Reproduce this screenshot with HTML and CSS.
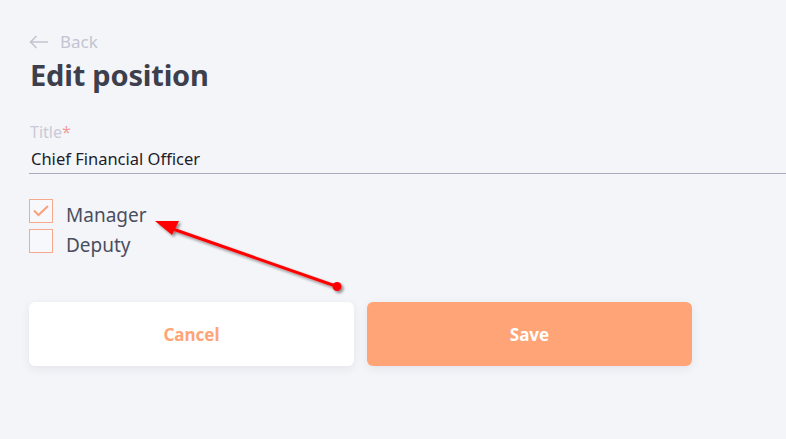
FILE: index.html
```html
<!DOCTYPE html>
<html>
<head>
<meta charset="utf-8">
<link rel="stylesheet" href="styles.css">
</head>
<body>
<div class="page">
  <a class="back">
    <svg class="back-icon" width="20" height="14" viewBox="0 0 20 14"><path d="M19 7H1.5M7.5 1L1.5 7l6 6" fill="none" stroke="#c3c4d1" stroke-width="1.6"/></svg>
    <span>Back</span>
  </a>
  <h1 class="heading">Edit position</h1>

  <div class="field">
    <label class="label">Title<span class="req">*</span></label>
    <div class="input">Chief Financial Officer</div>
  </div>

  <div class="checks">
    <label class="check">
      <span class="box"><svg width="16" height="12" viewBox="0 0 16 12"><path d="M1 5.5l4.5 4.5L15 1" fill="none" stroke="#f9a07c" stroke-width="2"/></svg></span>
      <span class="check-text">Manager</span>
    </label>
    <label class="check">
      <span class="box"></span>
      <span class="check-text">Deputy</span>
    </label>
  </div>

  <div class="actions">
    <button class="btn btn-cancel">Cancel</button>
    <button class="btn btn-save">Save</button>
  </div>

  <svg class="annot" width="786" height="439" viewBox="0 0 786 439">
    <defs>
      <filter id="sh" x="-20%" y="-50%" width="140%" height="200%">
        <feGaussianBlur in="SourceAlpha" stdDeviation="1.5"/>
        <feOffset dx="2" dy="2" result="b"/>
        <feComponentTransfer><feFuncA type="linear" slope="0.45"/></feComponentTransfer>
        <feMerge><feMergeNode/><feMergeNode in="SourceGraphic"/></feMerge>
      </filter>
    </defs>
    <g filter="url(#sh)">
      <line x1="337" y1="286.5" x2="170" y2="228" stroke="#ff0000" stroke-width="3"/>
      <polygon points="155,221 179,221 172,235" fill="#ff0000"/>
      <circle cx="337" cy="286.5" r="4.5" fill="#ff0000"/>
    </g>
  </svg>
</div>
</body>
</html>
```
FILE: styles.css
```css
html, body {
  margin: 0;
  padding: 0;
  background: #f4f5f9;
}
body {
  font-family: "Noto Sans", "Open Sans", sans-serif;
}
.page {
  position: relative;
  width: 786px;
  height: 439px;
  padding: 30px 0 0 29px;
  box-sizing: border-box;
  overflow: hidden;
}
.back {
  display: flex;
  align-items: center;
  gap: 11px;
  height: 24px;
  color: #c3c4d1;
  font-size: 17px;
  line-height: 24px;
}
.back-icon {
  display: block;
}
.heading {
  margin: 3px 0 0 1px;
  font-size: 29px;
  line-height: 36px;
  font-weight: 700;
  color: #3d3f4d;
  letter-spacing: -0.2px;
}
.field {
  margin-top: 29px;
}
.label {
  display: block;
  font-size: 16px;
  line-height: 20px;
  color: #c9cad6;
  margin-left: 1px;
}
.req {
  color: #f49a9a;
}
.input {
  font-size: 16.5px;
  line-height: 20px;
  padding: 7px 0 4px 2px;
  color: #1c1c2a;
  border-bottom: 1px solid #a9aabb;
}
.checks {
  margin-top: 25px;
  display: flex;
  flex-direction: column;
  gap: 6px;
}
.check {
  display: flex;
  align-items: center;
  gap: 13px;
  height: 24px;
}
.box {
  width: 24px;
  height: 24px;
  box-sizing: border-box;
  border: 1px solid #f7a98b;
  background: #f7f8fb;
  display: flex;
  align-items: center;
  justify-content: center;
}
.check-text {
  font-size: 19px;
  color: #4b4e5f;
  position: relative;
  top: 4px;
}
.actions {
  margin-top: 49px;
  display: flex;
  gap: 13px;
}
.btn {
  width: 325px;
  height: 64px;
  border: none;
  border-radius: 6px;
  font-family: "Noto Sans", "Open Sans", sans-serif;
  font-size: 17px;
  font-weight: 700;
  box-shadow: 0 3px 10px rgba(40, 45, 80, 0.08);
}
.btn-cancel {
  background: #ffffff;
  color: #ffa477;
}
.btn-save {
  background: #ffa477;
  color: #ffffff;
}
.annot {
  position: absolute;
  left: 0;
  top: 0;
  pointer-events: none;
}
```
